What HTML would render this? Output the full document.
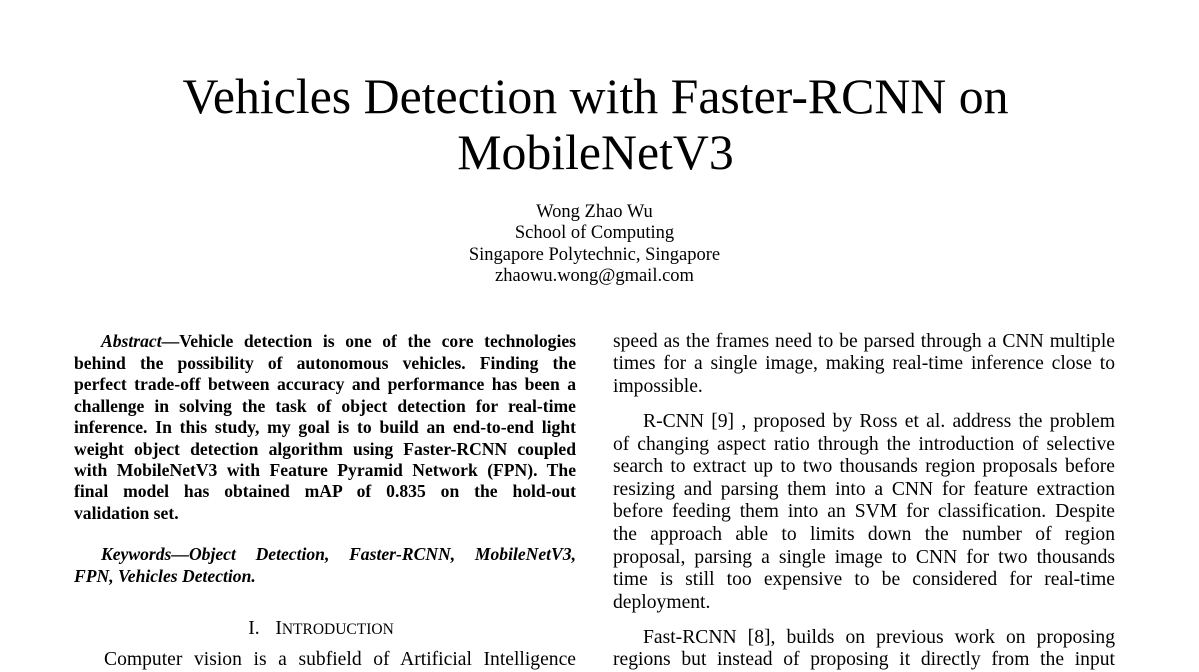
<!DOCTYPE html>
<html><head><meta charset="utf-8"><style>
html,body{margin:0;padding:0;background:#fff;}
body{width:1199px;height:669px;position:relative;overflow:hidden;font-family:"Liberation Serif",serif;color:#000;}
.t{position:absolute;left:-4px;width:1199px;text-align:center;font-size:49.8px;line-height:56px;}
.a{position:absolute;left:-5px;width:1199px;text-align:center;font-size:18.5px;line-height:21.3px;}
.l{position:absolute;white-space:nowrap;text-align:justify;text-align-last:justify;}
.n{text-align-last:left;}
.L{left:74px;width:502px;font-size:17.6px;line-height:21.5px;font-weight:bold;}
.R{left:613px;width:502px;font-size:19.6px;line-height:22.6px;}
.B{left:74px;width:502px;font-size:19.6px;line-height:22.6px;}
</style></head><body>
<div class="t" style="top:69px">Vehicles Detection with Faster-RCNN on</div>
<div class="t" style="top:125px">MobileNetV3</div>
<div class="a" style="top:202px">Wong Zhao Wu<br>School of Computing<br>Singapore Polytechnic, Singapore<br>zhaowu.wong@gmail.com</div>

<div class="l L" style="top:331px;padding-left:27px;width:475px"><i>Abstract</i>—Vehicle detection is one of the core technologies</div>
<div class="l L" style="top:353px">behind the possibility of autonomous vehicles. Finding the</div>
<div class="l L" style="top:374px">perfect trade-off between accuracy and performance has been a</div>
<div class="l L" style="top:396px">challenge in solving the task of object detection for real-time</div>
<div class="l L" style="top:417px">inference. In this study, my goal is to build an end-to-end light</div>
<div class="l L" style="top:439px">weight object detection algorithm using Faster-RCNN coupled</div>
<div class="l L" style="top:460px">with MobileNetV3 with Feature Pyramid Network (FPN). The</div>
<div class="l L" style="top:481px">final model has obtained mAP of 0.835 on the hold-out</div>
<div class="l L n" style="top:503px">validation set.</div>
<div class="l L" style="top:544px;padding-left:27px;width:475px"><i>Keywords—Object Detection, Faster-RCNN, MobileNetV3,</i></div>
<div class="l L n" style="top:566px"><i>FPN, Vehicles Detection.</i></div>
<div style="position:absolute;left:70px;width:502px;top:618px;text-align:center;font-size:19.5px;line-height:22px;word-spacing:3px">I.&nbsp;&nbsp;I<span style="font-size:15.5px">NTRODUCTION</span></div>
<div class="l B" style="top:649px;padding-left:30px;width:472px">Computer vision is a subfield of Artificial Intelligence</div>

<div class="l R" style="top:331px">speed as the frames need to be parsed through a CNN multiple</div>
<div class="l R" style="top:353px">times for a single image, making real-time inference close to</div>
<div class="l R n" style="top:376px">impossible.</div>
<div class="l R" style="top:411px;padding-left:30px;width:472px">R-CNN [9] , proposed by Ross et al. address the problem</div>
<div class="l R" style="top:434px">of changing aspect ratio through the introduction of selective</div>
<div class="l R" style="top:456px">search to extract up to two thousands region proposals before</div>
<div class="l R" style="top:479px">resizing and parsing them into a CNN for feature extraction</div>
<div class="l R" style="top:501px">before feeding them into an SVM for classification. Despite</div>
<div class="l R" style="top:524px">the approach able to limits down the number of region</div>
<div class="l R" style="top:547px">proposal, parsing a single image to CNN for two thousands</div>
<div class="l R" style="top:569px">time is still too expensive to be considered for real-time</div>
<div class="l R n" style="top:592px">deployment.</div>
<div class="l R" style="top:627px;padding-left:30px;width:472px">Fast-RCNN [8], builds on previous work on proposing</div>
<div class="l R" style="top:649px">regions but instead of proposing it directly from the input</div>
</body></html>
